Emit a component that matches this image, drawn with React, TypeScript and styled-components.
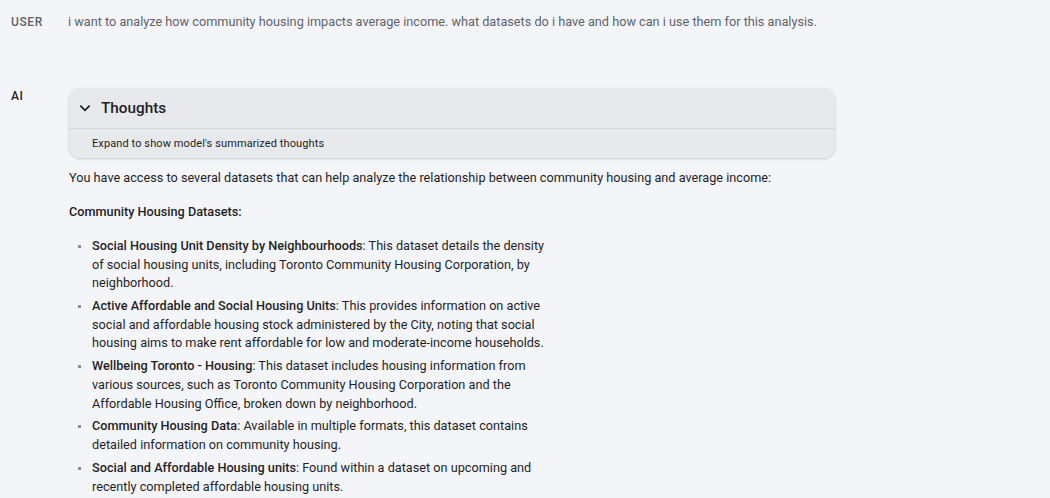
import React from 'react';
import styled, {createGlobalStyle} from 'styled-components';

const GlobalStyle = createGlobalStyle`
  html, body {
    margin: 0;
    padding: 0;
    background: #f4f5f9;
    font-family: Roboto, "Liberation Sans", sans-serif;
  }
`;

const Page = styled.div`
  padding: 13px 11px;
  display: flex;
  flex-direction: column;
  gap: 57px;
`;

const Turn = styled.div`
  display: grid;
  grid-template-columns: 57px 1fr;
  align-items: start;
`;

const Role = styled.div<{dark?: boolean}>`
  font-size: 12px;
  font-weight: 500;
  line-height: ${(p) => (p.dark ? '16px' : '18px')};
  letter-spacing: 0.6px;
  color: ${(p) => (p.dark ? '#1f1f1f' : '#5f6368')};
`;

const UserText = styled.div`
  font-size: 12.7px;
  line-height: 18px;
  color: #5f6368;
`;

const Answer = styled.div`
  display: flex;
  flex-direction: column;
`;

const ThoughtsCard = styled.div`
  width: 766px;
  background: #e8e9ed;
  border-radius: 12px;
  box-shadow: 0 1px 3px rgba(0, 0, 0, 0.18);
  margin-left: 1px;
`;

const ThoughtsHeader = styled.div`
  height: 40px;
  display: flex;
  align-items: center;
  gap: 9px;
  padding-left: 9px;
  border-bottom: 1px solid #d5d7db;
  font-size: 15.3px;
  font-weight: 500;
  color: #1f1f1f;
`;

const ThoughtsBody = styled.div`
  height: 29px;
  display: flex;
  align-items: center;
  padding-left: 23px;
  font-size: 11px;
  letter-spacing: 0.1px;
  color: #1f1f1f;
`;

const Body = styled.div`
  padding-top: 11px;
  font-size: 12.7px;
  line-height: 18.6px;
  color: #1f1f1f;
  margin-left: 1px;
`;

const Para = styled.p`
  margin: 0 0 15.4px;
`;

const Strong = styled.span`
  font-weight: 500;
`;

const List = styled.ul`
  list-style: none;
  margin: 0;
  padding: 0 0 0 23px;
  width: 460px;
`;

const Item = styled.li`
  position: relative;
  margin-bottom: 4.4px;

  &::before {
    content: '';
    position: absolute;
    left: -14px;
    top: 8px;
    width: 3px;
    height: 3px;
    background: #8a8d91;
  }
`;

const Chevron = () => (
  <svg width="14" height="14" viewBox="0 0 24 24">
    <path d="M4 8l8 8 8-8" fill="none" stroke="#1f1f1f" strokeWidth="3" />
  </svg>
);

const datasets = [
  {
    name: 'Social Housing Unit Density by Neighbourhoods',
    text: 'This dataset details the density of social housing units, including Toronto Community Housing Corporation, by neighborhood.',
  },
  {
    name: 'Active Affordable and Social Housing Units',
    text: 'This provides information on active social and affordable housing stock administered by the City, noting that social housing aims to make rent affordable for low and moderate-income households.',
  },
  {
    name: 'Wellbeing Toronto - Housing',
    text: 'This dataset includes housing information from various sources, such as Toronto Community Housing Corporation and the Affordable Housing Office, broken down by neighborhood.',
  },
  {
    name: 'Community Housing Data',
    text: 'Available in multiple formats, this dataset contains detailed information on community housing.',
  },
  {
    name: 'Social and Affordable Housing units',
    text: 'Found within a dataset on upcoming and recently completed affordable housing units.',
  },
];

const App = () => {
  return (
    <>
      <GlobalStyle />
      <Page>
        <Turn>
          <Role>USER</Role>
          <UserText>
            i want to analyze how community housing impacts average income. what datasets do i have and how can i use them for this analysis.
          </UserText>
        </Turn>
        <Turn>
          <Role dark>AI</Role>
          <Answer>
            <ThoughtsCard>
              <ThoughtsHeader>
                <Chevron />
                Thoughts
              </ThoughtsHeader>
              <ThoughtsBody>Expand to show model's summarized thoughts</ThoughtsBody>
            </ThoughtsCard>
            <Body>
              <Para>
                You have access to several datasets that can help analyze the relationship between community housing and average income:
              </Para>
              <Para>
                <Strong>Community Housing Datasets:</Strong>
              </Para>
              <List>
                {datasets.map((d) => (
                  <Item key={d.name}>
                    <Strong>{d.name}</Strong>: {d.text}
                  </Item>
                ))}
              </List>
            </Body>
          </Answer>
        </Turn>
      </Page>
    </>
  );
};

export default App;
